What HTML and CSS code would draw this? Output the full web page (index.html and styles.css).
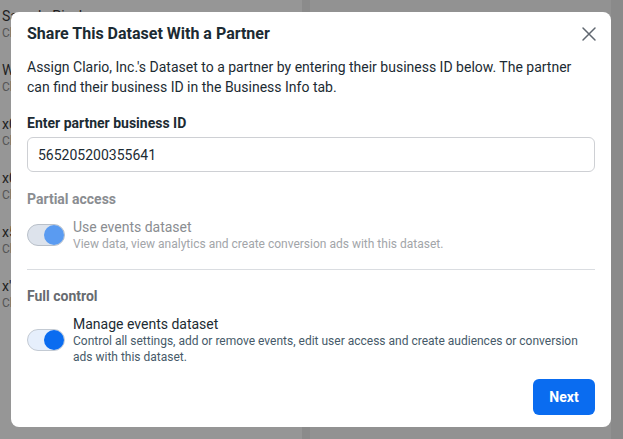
FILE: index.html
```html
<!DOCTYPE html>
<html>
<head>
    <title>Share This Dataset With a Partner</title>
    <meta charset="UTF-8">
    <link rel="stylesheet" href="styles.css">
</head>

<body>

<div class="page">
    <div class="list">
        <div class="row"><div class="row-name">Sample Pixel</div><div class="row-sub">Clario, Inc.</div></div>
        <div class="row"><div class="row-name">Web Dataset</div><div class="row-sub">Clario, Inc.</div></div>
        <div class="row"><div class="row-name">x0 Dataset</div><div class="row-sub">Clario, Inc.</div></div>
        <div class="row"><div class="row-name">x0 Pixel</div><div class="row-sub">Clario, Inc.</div></div>
        <div class="row"><div class="row-name">x5 Dataset</div><div class="row-sub">Clario, Inc.</div></div>
        <div class="row"><div class="row-name">x' Dataset</div><div class="row-sub">Clario, Inc.</div></div>
    </div>
    <div class="split"></div>
    <div class="main"></div>
    <div class="rail"></div>
</div>

<div class="modal">
    <div class="modal-head">
        <h2>Share This Dataset With a Partner</h2>
        <svg class="close" width="16" height="16" viewBox="0 0 16 16">
            <path d="M2 2 L14 14 M14 2 L2 14" stroke="#606770" stroke-width="1.5" stroke-linecap="round" fill="none"/>
        </svg>
    </div>

    <p class="intro">Assign Clario, Inc.'s Dataset to a partner by entering their business ID below. The partner can find their business ID in the Business Info tab.</p>

    <label class="field-label" for="partner_id">Enter partner business ID</label>
    <input class="field" type="text" id="partner_id" value="565205200355641">

    <div class="group-label muted">Partial access</div>
    <div class="option disabled">
        <span class="toggle"><span class="knob"></span></span>
        <div class="option-text">
            <div class="option-title">Use events dataset</div>
            <div class="option-desc">View data, view analytics and create conversion ads with this dataset.</div>
        </div>
    </div>

    <hr class="divider">

    <div class="group-label">Full control</div>
    <div class="option">
        <span class="toggle"><span class="knob"></span></span>
        <div class="option-text">
            <div class="option-title">Manage events dataset</div>
            <div class="option-desc">Control all settings, add or remove events, edit user access and create audiences or conversion ads with this dataset.</div>
        </div>
    </div>

    <div class="modal-foot">
        <button type="button">Next</button>
    </div>
</div>

</body>
</html>
```

FILE: styles.css
```css
body {
    margin: 0;
    font-family: Roboto, "Liberation Sans", Arial, sans-serif;
    background-color: #8f8f8f;
    overflow: hidden;
}

/* 背后的页面（已被遮罩压暗） */
.page {
    display: flex;
    height: 100vh;
}

.list {
    width: 302px;
    background-color: #969696;
    padding-top: 7px;
    box-sizing: border-box;
}

.row {
    height: 54px;
    padding-left: 2px;
}

.row-name {
    font-size: 14px;
    line-height: 18px;
    color: #1f1f1f;
    white-space: nowrap;
}

.row-sub {
    font-size: 12px;
    line-height: 16px;
    color: #555;
}

.split {
    width: 8px;
    background-color: #8b8b8b;
}

.main {
    flex: 1;
    background-color: #929292;
}

.rail {
    width: 12px;
    background-color: #8a8a8a;
}

/* 弹窗 */
.modal {
    position: absolute;
    left: 11px;
    top: 12px;
    width: 600px;
    box-sizing: border-box;
    padding: 12px 16px;
    background-color: #fff;
    border-radius: 8px;
    color: #1c2b33;
}

.modal-head {
    display: flex;
    align-items: center;
    justify-content: space-between;
}

.modal-head h2 {
    margin: 0;
    font-size: 16px;
    line-height: 20px;
    font-weight: 700;
}

.close {
    margin-right: -2px;
}

.intro {
    margin: 13px 0 0;
    font-size: 14px;
    line-height: 20px;
}

.field-label {
    display: block;
    margin-top: 16px;
    font-size: 14px;
    line-height: 20px;
    font-weight: 700;
}

.field {
    display: block;
    width: 100%;
    height: 35px;
    margin-top: 4px;
    padding: 0 10px;
    box-sizing: border-box;
    border: 1px solid #ced0d4;
    border-radius: 6px;
    font-family: inherit;
    font-size: 14px;
    color: #1c2b33;
    outline: none;
}

.group-label {
    margin-top: 17px;
    font-size: 14px;
    line-height: 20px;
    font-weight: 700;
    color: #676b70;
}

.group-label.muted {
    color: #8a8d91;
}

.option {
    display: flex;
    align-items: center;
    gap: 8px;
    margin-top: 9px;
}

.toggle {
    flex: none;
    position: relative;
    width: 38px;
    height: 22px;
    box-sizing: border-box;
    border: 1px solid #c3cad3;
    border-radius: 11px;
    background-color: #e6effc;
}

.knob {
    position: absolute;
    right: 0;
    top: 0;
    width: 20px;
    height: 20px;
    border-radius: 50%;
    background-color: #0a6cf0;
}

.disabled .toggle {
    background-color: #dde3ec;
    border-color: #b9c0c9;
}

.disabled .knob {
    background-color: #5a9bf1;
}

.option-title {
    font-size: 14px;
    line-height: 18px;
}

.option-desc {
    font-size: 12px;
    line-height: 16px;
    color: #465a69;
}

.disabled .option-title {
    color: #8a8d91;
}

.disabled .option-desc {
    color: #a2a5a9;
}

.divider {
    margin: 17px 0 0;
    border: none;
    border-top: 1px solid #dadde1;
}

.divider + .group-label {
    margin-top: 16px;
}

.modal-foot {
    display: flex;
    justify-content: flex-end;
    margin-top: 14px;
}

button {
    width: 62px;
    height: 36px;
    border: none;
    border-radius: 6px;
    background-color: #0a6cf0;
    color: #fff;
    font-family: inherit;
    font-size: 14px;
    font-weight: 700;
    cursor: pointer;
}

button:hover {
    background-color: #085ed4;
}
```
